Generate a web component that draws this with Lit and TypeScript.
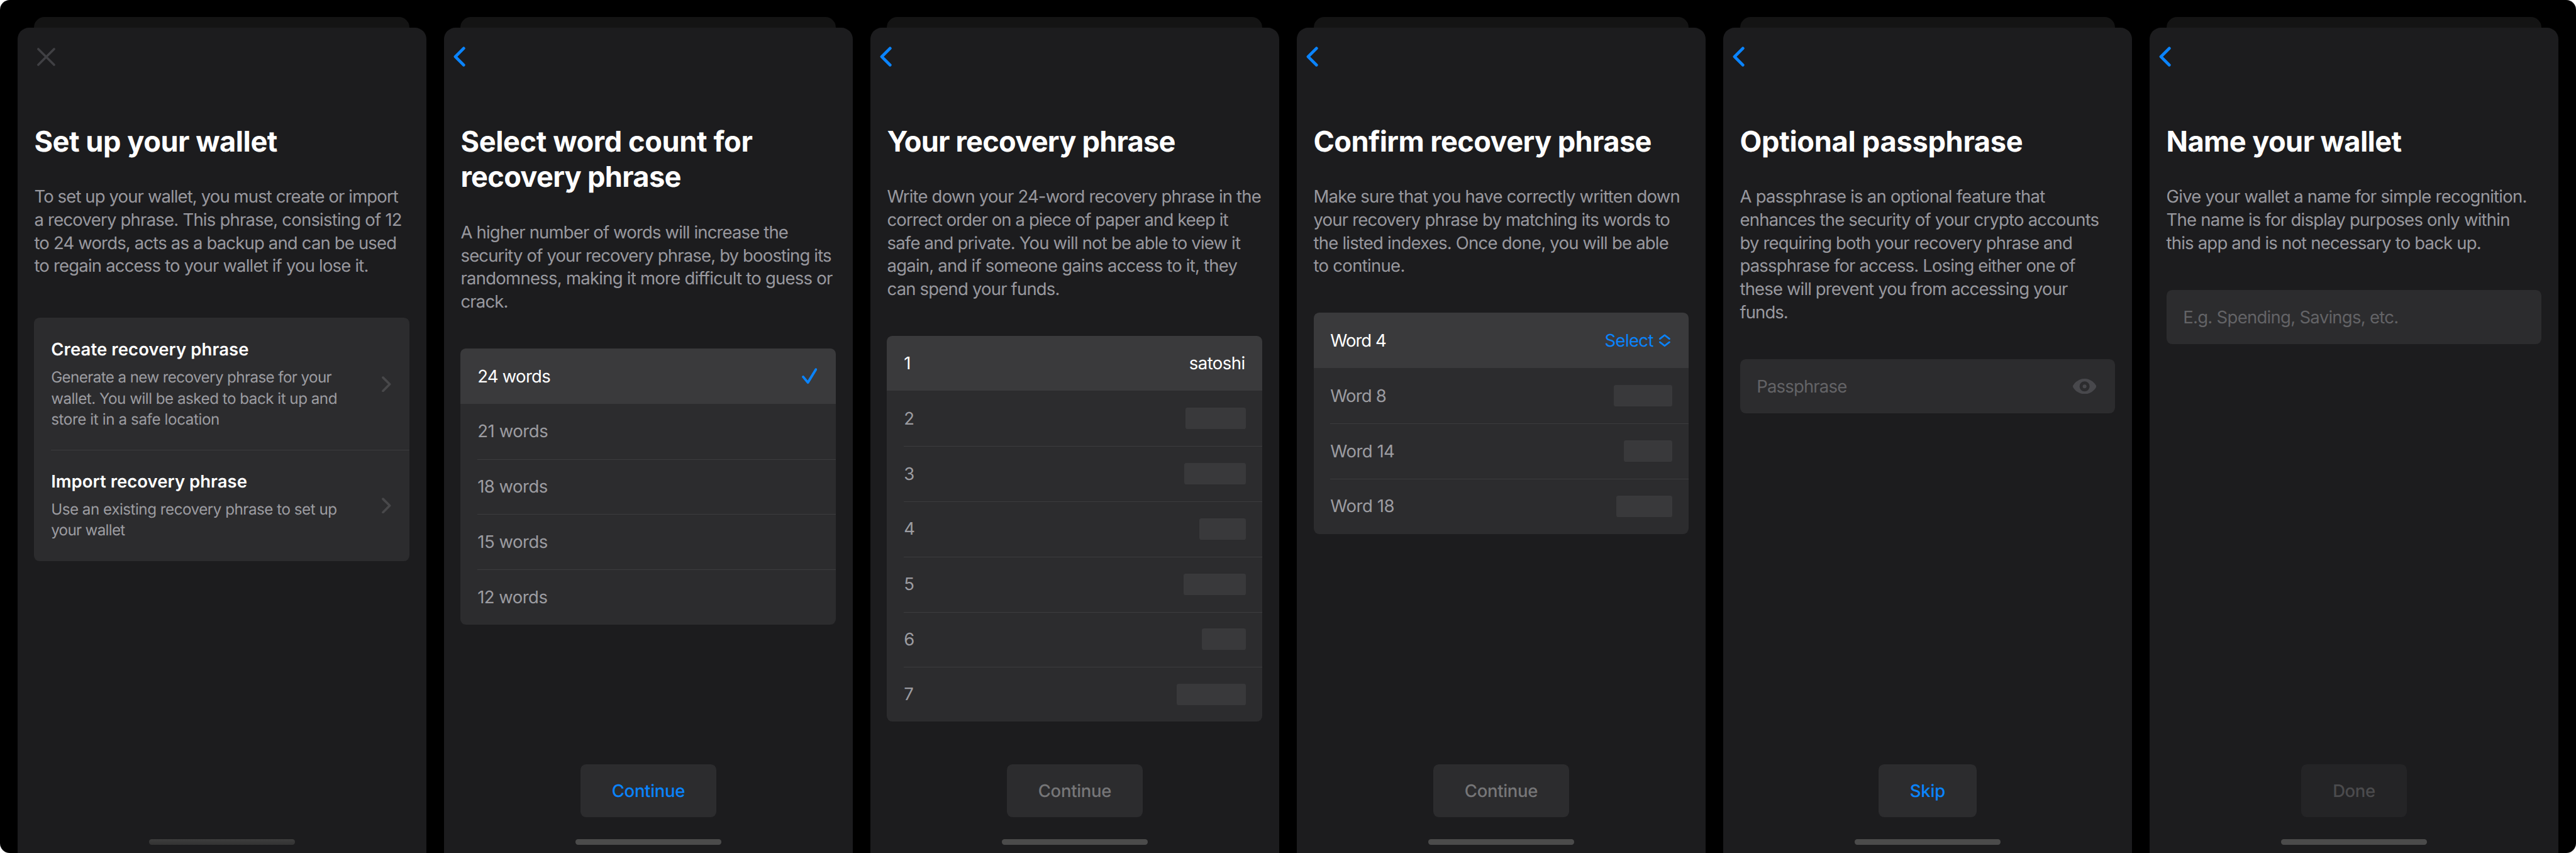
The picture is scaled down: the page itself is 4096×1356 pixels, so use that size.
import { LitElement, html, css, svg, nothing, TemplateResult } from "lit";
import { customElement, property } from "lit/decorators.js";
import { classMap } from "lit/directives/class-map.js";
import { styleMap } from "lit/directives/style-map.js";

/** A line of text and the width its glyphs take up on the artboard. */
type Line = [text: string, width: number];

type Trailing =
  | { kind: "word"; line: Line }
  | { kind: "redacted"; width: number }
  | { kind: "check" }
  | { kind: "select"; line: Line };

interface Row {
  label: Line;
  height?: number;
  trailing?: Trailing;
}

interface Choice {
  title: Line;
  detail: Line[];
}

interface Action {
  label: Line;
  width: number;
  tone: "primary" | "muted" | "disabled";
}

interface Screen {
  first?: boolean;
  title: Line[];
  body: Line[];
  choices?: Choice[];
  rows?: Row[];
  field?: { placeholder: Line; reveal?: boolean };
  action?: Action;
}

const FAMILY = '"Inter", "Liberation Sans", sans-serif';
const pen = document.createElement("canvas").getContext("2d")!;

/** Tracking that makes a line as wide as the design asks for. */
function tracking([text, width]: Line, size: number, weight: number): string {
  if (text.length < 2 || !width) return "0px";
  pen.font = `${weight} 100px ${FAMILY}`;
  const m = pen.measureText(text);
  const ink = ((m.actualBoundingBoxLeft + m.actualBoundingBoxRight) * size) / 100;
  return `${((width - ink) / (text.length - 1)).toFixed(3)}px`;
}

@customElement("text-line")
class TextLine extends LitElement {
  static styles = css`
    :host {
      display: block;
      white-space: nowrap;
    }
    .run {
      display: block;
    }
  `;
  @property({ attribute: false }) line: Line = ["", 0];
  @property({ type: Number }) size = 49.5;
  @property({ type: Number }) weight = 400;

  render() {
    const style = {
      fontSize: `${this.size}px`,
      fontWeight: `${this.weight}`,
      letterSpacing: tracking(this.line, this.size, this.weight),
    };
    return html`<span class="run" style=${styleMap(style)}>${this.line[0]}</span>`;
  }
}

const text = (line: Line, size = 49.5, weight = 400) =>
  html`<text-line .line=${line} .size=${size} .weight=${weight}></text-line>`;

const stroke = (
  cls: string,
  w: number,
  h: number,
  width: number,
  paths: string[],
): TemplateResult => html`
  <svg class=${cls} width=${w} height=${h} viewBox="0 0 ${w} ${h}" fill="none"
    stroke="currentColor" stroke-width=${width} stroke-linecap="round" stroke-linejoin="round">
    ${paths.map((d) => svg`<path d=${d}></path>`)}
  </svg>
`;

const closeIcon = stroke("close", 52, 52, 6.4, ["M3.4 3.4 48.6 48.6", "M48.6 3.4 3.4 48.6"]);
const backIcon = stroke("back", 34, 58, 8.6, ["M29.3 5.2 5.4 29 29.3 52.8"]);
const forwardIcon = stroke("forward", 27, 46, 6.6, ["M3.6 3.8 22.8 23 3.6 42.2"]);
const checkIcon = stroke("check", 44, 46, 7, ["M3.8 25.4 17.2 41.6 40.2 4.2"]);
const updownIcon = stroke("updown", 32, 37, 4.8, [
  "M2.4 13.8 16 3.2 29.6 13.8",
  "M2.4 23.2 16 33.8 29.6 23.2",
]);
const eyeIcon = html`
  <svg class="eye" width="67" height="44" viewBox="0 0 67 44">
    <path fill="currentColor" fill-rule="evenodd"
      d="M33.5 0C54 0 67 17.6 67 22S54 44 33.5 44 0 26.4 0 22 13 0 33.5 0ZM33.5 7.6a14.4 14.4 0 1 0 0 28.8 14.4 14.4 0 0 0 0-28.8Z"></path>
    <circle cx="33.5" cy="22" r="5.4" fill="currentColor"></circle>
  </svg>
`;

@customElement("wallet-screen")
class WalletScreen extends LitElement {
  static styles = css`
    :host {
      display: flex;
      flex-direction: column;
      width: 1170px;
      height: 2391px;
    }
    .behind {
      flex: none;
      height: 30px;
      margin: 0 48px;
      border-radius: 30px 30px 0 0;
      background: #141414;
    }
    .sheet {
      flex: 1;
      box-sizing: border-box;
      display: flex;
      flex-direction: column;
      padding: 0 48px 24px;
      border-radius: 33px 33px 0 0;
      background: #1c1c1e;
      overflow: hidden;
    }
    svg {
      display: block;
      flex: none;
    }
    .nav {
      flex: none;
      display: flex;
      align-items: center;
      height: 168px;
      margin-bottom: 107px;
    }
    .close {
      color: #404044;
      margin-left: 8px;
    }
    .back {
      color: #0a84ff;
      margin-left: -20px;
    }
    .title {
      color: #fff;
      line-height: 102px;
      margin-bottom: 73.5px;
    }
    .body {
      color: #98989e;
      line-height: 66px;
      margin-bottom: 101.5px;
    }
    .body.first {
      margin-bottom: 116px;
    }
    .card {
      flex: none;
      border-radius: 16px;
      overflow: hidden;
      background: #2c2c2e;
    }
    .choice {
      display: flex;
      align-items: center;
      justify-content: space-between;
      padding: 57.6px 52px 57.6px 48px;
    }
    .choice-title {
      color: #fff;
      line-height: 66px;
      margin-bottom: 16.3px;
    }
    .detail {
      color: #9c9ca1;
      line-height: 60px;
    }
    .forward {
      color: #48484a;
    }
    .rule {
      height: 1.8px;
      margin: 0 0 -1.8px 48px;
      background: #3c3c3e;
    }
    .row {
      box-sizing: border-box;
      display: flex;
      align-items: center;
      justify-content: space-between;
      height: 158px;
      padding: 0 48px;
      color: #9c9ca1;
      line-height: 66px;
    }
    .row.active {
      background: #3a3a3c;
      color: #fff;
    }
    .redacted {
      height: 61px;
      border-radius: 6px;
      background: #39393b;
    }
    .check {
      color: #0a84ff;
      margin-right: 6px;
    }
    .select {
      display: flex;
      align-items: center;
      gap: 17px;
      margin-right: 5px;
      color: #0a84ff;
    }
    .word {
      margin-right: 2px;
    }
    .field {
      box-sizing: border-box;
      height: 156px;
      display: flex;
      align-items: center;
      justify-content: space-between;
      padding: 0 54px 0 48px;
      line-height: 66px;
      color: #636366;
    }
    .eye {
      color: #48484c;
    }
    .space {
      flex: 1;
    }
    .action {
      flex: none;
      align-self: center;
      display: flex;
      align-items: center;
      justify-content: center;
      height: 151px;
      margin-bottom: 63px;
      border-radius: 16px;
      background: #2c2c2e;
      line-height: 66px;
    }
    .primary {
      color: #0a84ff;
    }
    .muted {
      color: #767678;
    }
    .disabled {
      color: #4b4b4d;
      background: #242426;
    }
    .home {
      flex: none;
      align-self: center;
      width: 417px;
      height: 15px;
      border-radius: 7.5px;
      background: #4b4b4b;
    }
    .home.dim {
      background: linear-gradient(#3d3d3d, #333);
    }
  `;

  @property({ attribute: false }) screen!: Screen;

  private trailing(t?: Trailing) {
    switch (t?.kind) {
      case "word":
        return html`<div class="word">${text(t.line)}</div>`;
      case "redacted":
        return html`<div class="redacted" style=${styleMap({ width: `${t.width}px` })}></div>`;
      case "check":
        return checkIcon;
      case "select":
        return html`<div class="select">${text(t.line)}${updownIcon}</div>`;
      default:
        return nothing;
    }
  }

  private choices(list: Choice[]) {
    return html`<div class="card">
      ${list.map(
        (c, i) => html`
          ${i ? html`<div class="rule"></div>` : nothing}
          <div class="choice">
            <div>
              <div class="choice-title">${text(c.title, 49.5, 600)}</div>
              <div class="detail">${c.detail.map((l) => text(l, 43.6))}</div>
            </div>
            ${forwardIcon}
          </div>
        `,
      )}
    </div>`;
  }

  private rows(list: Row[]) {
    return html`<div class="card">
      ${list.map(
        (r, i) => html`
          ${i > 1 ? html`<div class="rule"></div>` : nothing}
          <div class=${classMap({ row: true, active: i === 0 })}
            style=${styleMap(r.height ? { height: `${r.height}px` } : {})}>
            ${text(r.label)}${this.trailing(r.trailing)}
          </div>
        `,
      )}
    </div>`;
  }

  render() {
    const s = this.screen;
    return html`
      <div class="behind"></div>
      <div class="sheet">
        <div class="nav">${s.first ? closeIcon : backIcon}</div>
        <div class="title">${s.title.map((l) => text(l, 81.4, 700))}</div>
        <div class=${classMap({ body: true, first: !!s.first })}>${s.body.map((l) => text(l))}</div>
        ${s.choices ? this.choices(s.choices) : nothing}
        ${s.rows ? this.rows(s.rows) : nothing}
        ${s.field
          ? html`<div class="card field">
              ${text(s.field.placeholder)}${s.field.reveal ? eyeIcon : nothing}
            </div>`
          : nothing}
        <div class="space"></div>
        ${s.action
          ? html`<div class=${`action ${s.action.tone}`}
              style=${styleMap({ width: `${s.action.width}px` })}>
              ${text(s.action.label, 49.5, 500)}
            </div>`
          : nothing}
        <div class=${classMap({ home: true, dim: !!s.first })}></div>
      </div>
    `;
  }
}

const redacted = (width: number): Trailing => ({ kind: "redacted", width });

const SCREENS: Screen[] = [
  {
    first: true,
    title: [["Set up your wallet", 692]],
    body: [
      ["To set up your wallet, you must create or import", 1040],
      ["a recovery phrase. This phrase, consisting of 12", 1047.8],
      ["to 24 words, acts as a backup and can be used", 1034.4],
      ["to regain access to your wallet if you lose it.", 953.7],
    ],
    choices: [
      {
        title: ["Create recovery phrase", 561.5],
        detail: [
          ["Generate a new recovery phrase for your", 801.1],
          ["wallet. You will be asked to back it up and", 815.3],
          ["store it in a safe location", 477.7],
        ],
      },
      {
        title: ["Import recovery phrase", 555.9],
        detail: [
          ["Use an existing recovery phrase to set up", 813.8],
          ["your wallet", 211.1],
        ],
      },
    ],
  },
  {
    title: [
      ["Select word count for", 831.2],
      ["recovery phrase", 624],
    ],
    body: [
      ["A higher number of words will increase the", 935.5],
      ["security of your recovery phrase, by boosting its", 1057.3],
      ["randomness, making it more difficult to guess or", 1061.3],
      ["crack.", 130.5],
    ],
    rows: [
      { label: ["24 words", 204], trailing: { kind: "check" } },
      { label: ["21 words", 196.9] },
      { label: ["18 words", 197.7] },
      { label: ["15 words", 197.7] },
      { label: ["12 words", 196.9] },
    ],
    action: { label: ["Continue", 205.6], width: 390, tone: "primary" },
  },
  {
    title: [["Your recovery phrase", 821.7]],
    body: [
      ["Write down your 24-word recovery phrase in the", 1068.4],
      ["correct order on a piece of paper and keep it", 974.3],
      ["safe and private. You will not be able to view it", 1009.1],
      ["again, and if someone gains access to it, they", 1000.4],
      ["can spend your funds.", 488.7],
    ],
    rows: [
      { label: ["1", 0], height: 157, trailing: { kind: "word", line: ["satoshi", 155.8] } },
      { label: ["2", 0], trailing: redacted(173) },
      { label: ["3", 0], trailing: redacted(175) },
      { label: ["4", 0], trailing: redacted(133.5) },
      { label: ["5", 0], trailing: redacted(178) },
      { label: ["6", 0], trailing: redacted(125) },
      { label: ["7", 0], height: 156, trailing: redacted(198) },
    ],
    action: { label: ["Continue", 205.6], width: 390, tone: "muted" },
  },
  {
    title: [["Confirm recovery phrase", 962.4]],
    body: [
      ["Make sure that you have correctly written down", 1042.3],
      ["your recovery phrase by matching its words to", 1017.8],
      ["the listed indexes. Once done, you will be able", 1015.4],
      ["to continue.", 258.6],
    ],
    rows: [
      { label: ["Word 4", 157.4], trailing: { kind: "select", line: ["Select", 136.7] } },
      { label: ["Word 8", 157.4], trailing: redacted(166) },
      { label: ["Word 14", 181.1], trailing: redacted(137.6) },
      { label: ["Word 18", 180.3], trailing: redacted(159) },
    ],
    action: { label: ["Continue", 205.6], width: 390, tone: "muted" },
  },
  {
    title: [["Optional passphrase", 804.3]],
    body: [
      ["A passphrase is an optional feature that", 872.3],
      ["enhances the security of your crypto accounts", 1024.1],
      ["by requiring both your recovery phrase and", 945.8],
      ["passphrase for access. Losing either one of", 956.9],
      ["these will prevent you from accessing your", 938.7],
      ["funds.", 135.2],
    ],
    field: { placeholder: ["Passphrase", 253.1], reveal: true },
    action: { label: ["Skip", 97.7], width: 282, tone: "primary" },
  },
  {
    title: [["Name your wallet", 668.2]],
    body: [
      ["Give your wallet a name for simple recognition.", 1026.5],
      ["The name is for display purposes only within", 979],
      ["this app and is not necessary to back up.", 898.4],
    ],
    field: { placeholder: ["E.g. Spending, Savings, etc.", 609.7] },
    action: { label: ["Done", 116.6], width: 302.5, tone: "disabled" },
  },
];

@customElement("app-root")
class AppRoot extends LitElement {
  static styles = css`
    :host {
      display: block;
      height: 1356px;
      overflow: hidden;
      background: #fff;
    }
    /* The artboard is 7370 × 2440 and is scaled down to a 4096px wide window. */
    .artboard {
      zoom: 0.555767;
      box-sizing: border-box;
      display: flex;
      gap: 50px;
      width: 7370px;
      height: 2440px;
      padding: 49px 50px 0;
      border-radius: 28px;
      overflow: hidden;
      background: #000;
      font-family: "Inter", "Liberation Sans", sans-serif;
      text-rendering: geometricPrecision;
      -webkit-font-smoothing: antialiased;
    }
  `;

  render() {
    return html`
      <div class="artboard">
        ${SCREENS.map((s) => html`<wallet-screen .screen=${s}></wallet-screen>`)}
      </div>
    `;
  }
}
